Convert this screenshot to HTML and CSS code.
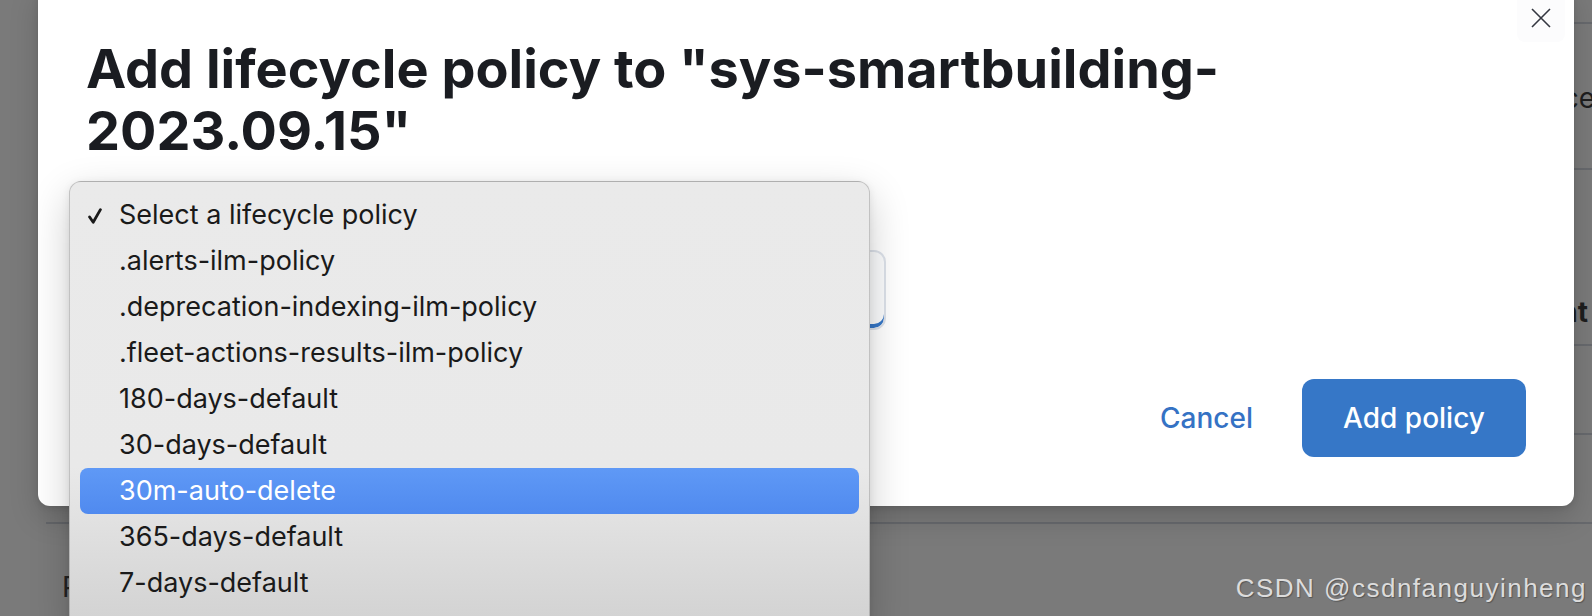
FILE: index.html
```html
<!DOCTYPE html>
<html lang="en">
<head>
  <meta charset="UTF-8" />
  <meta name="viewport" content="width=device-width, initial-scale=1.0" />
  <title>Add lifecycle policy</title>
  <link rel="stylesheet" href="styles.css">
</head>
<body>
  <!-- page behind the modal backdrop -->
  <div class="page">
    <div class="page-table">
      <div class="page-row row-top"></div>
      <div class="page-row row-head"><span class="cell-text">Maintenance</span></div>
      <div class="page-row row-bold"><span class="cell-text strong">Current</span></div>
      <div class="page-row row-mid"></div>
      <div class="page-row row-last"></div>
    </div>
    <div class="page-footer">P</div>
  </div>

  <div class="modal">
    <button class="modal-close" aria-label="Close">
      <svg width="20" height="20" viewBox="0 0 20 20">
        <path d="M1 1 L19 19 M19 1 L1 19" stroke="#343741" stroke-width="1.6" fill="none" />
      </svg>
    </button>

    <div class="modal-header">
      <h1 class="modal-title">Add lifecycle policy to "sys-smartbuilding-<br>2023.09.15"</h1>
    </div>

    <div class="modal-body">
      <div class="field-label"></div>
      <div class="field-select"></div>
    </div>

    <div class="modal-footer">
      <button class="btn-empty">Cancel</button>
      <button class="btn-fill">Add policy</button>
    </div>
  </div>

  <!-- native select popup -->
  <ul class="select-menu">
    <li class="option">
      <span class="tick">
        <svg width="14" height="16" viewBox="0 0 14 16">
          <path d="M1.6 9 L5.2 14.3 L12.4 1.6" stroke="#1a1a1a" stroke-width="2.8" fill="none" stroke-linecap="round" stroke-linejoin="round" />
        </svg>
      </span>Select a lifecycle policy
    </li>
    <li class="option"><span class="tick"></span>.alerts-ilm-policy</li>
    <li class="option"><span class="tick"></span>.deprecation-indexing-ilm-policy</li>
    <li class="option"><span class="tick"></span>.fleet-actions-results-ilm-policy</li>
    <li class="option"><span class="tick"></span>180-days-default</li>
    <li class="option"><span class="tick"></span>30-days-default</li>
    <li class="option active"><span class="tick"></span>30m-auto-delete</li>
    <li class="option"><span class="tick"></span>365-days-default</li>
    <li class="option"><span class="tick"></span>7-days-default</li>
  </ul>

  <div class="watermark">CSDN @csdnfanguyinheng</div>
</body>
</html>
```

FILE: styles.css
```css
html, body {
  margin: 0;
  padding: 0;
  height: 100%;
  overflow: hidden;
}
body {
  position: relative;
  background: #7a7a7a;
  font-family: Inter, "Noto Sans", sans-serif;
  color: #1c1c1c;
}

/* page under the backdrop */
.page-table {
  margin-left: 46px;
}
.page-row {
  display: flex;
  justify-content: flex-end;
  align-items: flex-start;
  border-bottom: 2px solid #67696d;
}
.row-top {
  height: 22px;
}
.row-head {
  height: 144px;
}
.row-head .cell-text {
  margin-top: 57px;
  margin-right: -3px;
}
.row-bold {
  height: 174px;
}
.row-bold .cell-text {
  margin-top: 125px;
  margin-right: 4px;
}
.row-mid,
.row-last {
  height: 87px;
}
.cell-text {
  font-size: 28px;
  line-height: 34px;
  color: #1e1e1e;
}
.cell-text.strong {
  font-weight: 700;
}
.page-footer {
  margin: 46px 0 0 62px;
  font-size: 28px;
  line-height: 34px;
  color: #222;
}

/* modal */
.modal {
  position: absolute;
  left: 38px;
  top: -16px;
  width: 1536px;
  background: #fff;
  border-radius: 12px;
  box-shadow: 0 12px 30px rgba(0, 0, 0, 0.16), 0 2px 6px rgba(0, 0, 0, 0.1);
}
.modal-close {
  position: absolute;
  top: 10px;
  right: 9px;
  width: 48px;
  height: 48px;
  padding: 0;
  border: none;
  border-radius: 8px;
  background: #fcfcfd;
  display: flex;
  align-items: center;
  justify-content: center;
  cursor: pointer;
}
.modal-header {
  padding: 54px 48px 0;
}
.modal-title {
  margin: 0;
  font-size: 54px;
  line-height: 62px;
  font-weight: 700;
  color: #1a1c21;
}
.modal-body {
  padding: 30px 48px 0;
}
.field-label {
  height: 42px;
  margin-bottom: 16px;
}
.field-select {
  box-sizing: border-box;
  width: 800px;
  height: 80px;
  border: 2px solid #dde2ea;
  border-radius: 12px;
  background: #fbfcfd;
  box-shadow: inset 0 -4px 0 #3677c7;
}
.modal-footer {
  display: flex;
  justify-content: flex-end;
  align-items: center;
  gap: 33px;
  padding: 49px 48px 49px;
}
.btn-empty,
.btn-fill {
  height: 78px;
  border: none;
  border-radius: 12px;
  font-family: Inter, sans-serif;
  font-size: 28px;
  font-weight: 500;
  cursor: pointer;
}
.btn-empty {
  padding: 0 16px;
  background: transparent;
  color: #3572c4;
}
.btn-fill {
  min-width: 224px;
  padding: 0 24px;
  background: #3677c7;
  color: #fff;
}

/* select popup */
.select-menu {
  position: absolute;
  left: 69px;
  top: 181px;
  width: 801px;
  height: 450px;
  box-sizing: border-box;
  margin: 0;
  padding: 10px;
  list-style: none;
  border: 1px solid rgba(0, 0, 0, 0.17);
  border-radius: 12px;
  background: linear-gradient(#eaeaea 0, #e9e9e9 285px, #d3d3d3 435px);
  box-shadow: 0 14px 40px rgba(0, 0, 0, 0.2), 0 2px 8px rgba(0, 0, 0, 0.08);
}
.option {
  height: 46px;
  padding-left: 8px;
  border-radius: 8px;
  font-size: 27px;
  line-height: 46px;
  color: #1a1a1a;
  white-space: nowrap;
}
.option.active {
  background: linear-gradient(#5f99f6, #508aef);
  color: #fff;
}
.tick {
  display: inline-block;
  width: 31px;
}

.watermark {
  position: absolute;
  right: 5px;
  bottom: 13px;
  font-family: "Liberation Sans", Arial, sans-serif;
  font-size: 26px;
  line-height: 30px;
  letter-spacing: 1.5px;
  color: #dcdcdc;
  text-shadow: 1px 1px 1px rgba(0, 0, 0, 0.3);
}
```
